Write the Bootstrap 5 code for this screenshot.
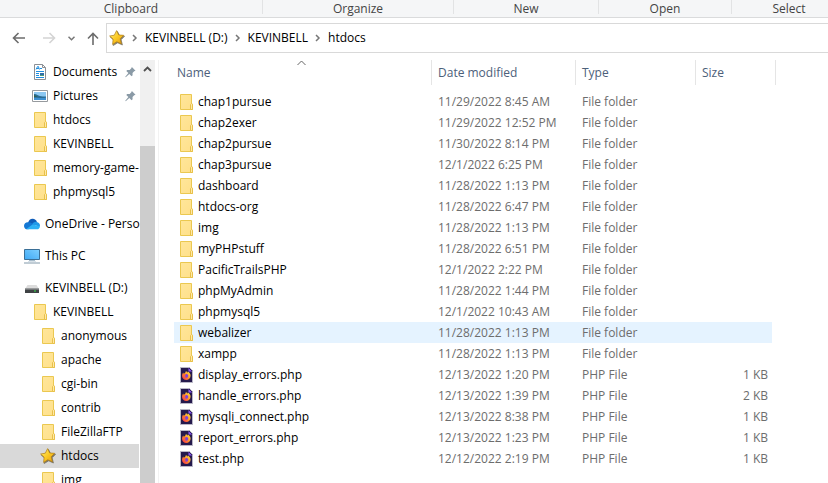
<!DOCTYPE html>
<html lang="en">
<head>
<meta charset="utf-8">
<meta name="viewport" content="width=device-width, initial-scale=1">
<title>htdocs</title>
<link href="https://cdn.jsdelivr.net/npm/bootstrap@5.3.0/dist/css/bootstrap.min.css" rel="stylesheet">
<style>
  body { font: 12px/18px "Open Sans", "Noto Sans", sans-serif; color: #000; background: #fff; }
  a { color: inherit; text-decoration: none; }
  svg { display: block; flex: none; }
  button { border: 0; padding: 0; background: none; color: inherit; }

  .ribbon { height: 18px; background: #f5f6f7; border-bottom: 1px solid #dadbdc; color: #444; }
  .ribbon-group { height: 14px; line-height: 17px; border-right: 1px solid #e2e3e4; text-align: center; flex: none; }
  .g-clip { width: 263px; } .g-org { width: 191px; } .g-new { width: 145px; } .g-open { width: 133px; } .g-sel { width: 114px; border: 0; }

  .address-row { padding: 5px 0 7px 12px; }
  .tools { width: 94px; gap: 12px; }
  .crumbs { height: 30px; gap: 7px; border: 1px solid #d9d9d9; border-right: 0; padding-left: 2px; }

  .tree-pane { width: 140px; }
  .tree-link { height: 24px; gap: 5px; padding-left: 24px; white-space: nowrap; }
  .level-1 { padding-left: 32px; }
  .level-2 { padding-left: 40px; }
  .tree-group + .tree-group { margin-top: 8px; }
  .tree-link.selected { background: #d9d9d9; margin-right: 1px; }
  .pin { margin: 0 4px 0 auto; }
  .scroll-track { width: 15px; background: #f0f0f0; }
  .scroll-up { height: 18px; margin-bottom: 68px; }
  .scroll-thumb { background: #cdcdcd; }
  .divider { width: 4px; border-right: 1px solid #f2f2f2; }

  .files-pane { padding-left: 15px; }
  .files { table-layout: fixed; width: 602px; border-collapse: separate; border-spacing: 0; }
  .files th { height: 25px; padding: 0 0 0 6px; font-weight: 400; color: #4c607a; border-right: 1px solid #e5e5e5; }
  .files th:first-child { padding-left: 3px; }
  .files tbody::before { content: ""; display: block; height: 6px; }
  .files td { height: 21px; padding: 0 0 0 6px; line-height: 21px; color: #6d6d6d; white-space: nowrap; }
  .files td:first-child { padding-left: 4px; color: #000; }
  .files td:nth-child(4) { text-align: right; padding-right: 4px; }
  .files tr.hovered td:not(:last-child) { background: #e5f3ff; }
  .file-name { gap: 4px; }
  .sort-mark { top: 0; left: 123px; }
</style>
<script src="https://cdn.jsdelivr.net/npm/bootstrap@5.3.0/dist/js/bootstrap.bundle.min.js"></script>
</head>
<body class="vh-100 d-flex flex-column overflow-hidden">

<svg width="0" height="0" class="position-absolute" aria-hidden="true">
  <defs>
    <linearGradient id="foldFill" x1="0" y1="0" x2="1" y2="1"><stop offset="0" stop-color="#ffe69a"/><stop offset="1" stop-color="#ffe08a"/></linearGradient>
    <linearGradient id="starFill" x1="0" y1="0" x2="1" y2="1"><stop offset="0" stop-color="#fff27a"/><stop offset=".5" stop-color="#fbc924"/><stop offset="1" stop-color="#e39a10"/></linearGradient>
    <linearGradient id="foxFill" x1="1" y1="0" x2="0" y2="1"><stop offset="0" stop-color="#fff04a"/><stop offset=".45" stop-color="#ff9a2a"/><stop offset="1" stop-color="#f5224e"/></linearGradient>
    <linearGradient id="screenFill" x1="0" y1="1" x2="1" y2="0"><stop offset="0" stop-color="#3fa9f5"/><stop offset="1" stop-color="#7fd0ff"/></linearGradient>
    <symbol id="folder" viewBox="0 0 16 16">
      <path d="M2.500.500h11v9l1 .5v5.500h-12z" fill="url(#foldFill)" stroke="#ebc850"/>
      <path d="M12.500 15.500v-5l1-1 1 1v5z" fill="#ffe9a6" stroke="#e8c04a"/>
    </symbol>
    <symbol id="star" viewBox="0 0 16 16">
      <path d="M8.500 1.500l2.200 4.300 4.900.4-3.500 3.500 1.300 5.300-4.700-2.200-4.500 2.700.6-5.300L1.300 7l4.800-.8z" fill="#5d5640" stroke="#5d5640" stroke-width=".8" opacity=".75"/>
      <path d="M7.600.6l2.100 4.400 5 .3-3.500 3.500 1.200 5-4.600-2-4.200 2.600.5-5.200L.6 6l4.700-.8z" fill="url(#starFill)" stroke="#b07c14" stroke-width=".7"/>
    </symbol>
    <symbol id="firefox-file" viewBox="0 0 16 16">
      <path d="M2.500.5h9l3 3v12h-12z" fill="#251a4d" stroke="#b9b7c6"/>
      <path d="M10.500 1l3.500 3.500h-3.500z" fill="#9059ff"/>
      <path d="M8 4.300c.8.300 1.300.8 1.500 1.400.3-.4.3-.9.200-1.300 2 1 3 2.600 2.900 4.400-.1 2.600-2 4.200-4.200 4.200-2.500 0-4.400-1.800-4.400-4.300 0-1.200.4-2.300 1.200-3.100l.5 1.100c.6-.4 1-.6 1.500-.6-.1-.7.2-1.300.8-1.800z" fill="url(#foxFill)"/>
      <circle cx="8.300" cy="8.800" r="1.900" fill="#7b3fe4"/>
      <path d="M5.500 7.300c1 .1 1.700-.2 2.600.2-.1.600-1 .8-1.300 1.200 0 .8.900 1.300 1.700 1-1 1.300-3 .6-3-2.400z" fill="#ff6a2e"/>
    </symbol>
    <symbol id="document" viewBox="0 0 16 16">
      <path d="M2.500.5h8l3 3v12h-11z" fill="#fff" stroke="#8b8f94"/>
      <path d="M10.500.5v3h3" fill="none" stroke="#8b8f94"/>
      <path d="M4 5.500l1.600-3h.8l1 3M4.600 4.500h2.300M8 4.500h2M4 7.500h8M4 9.500h3M4 11.500h3M4 13.500h8" fill="none" stroke="#1f8fe0"/>
      <path d="M8 9h4v3H8z" fill="#2f6ea8"/><path d="M8 11h4v1H8z" fill="#4f9a7a"/>
    </symbol>
    <symbol id="picture" viewBox="0 0 16 16">
      <path d="M.5 2.500h15v11H.5z" fill="#fff" stroke="#969a9e"/>
      <path d="M2 4h12v8H2z" fill="#8cc8f2"/>
      <path d="M2 6c2-.4 4 1.500 7 2.200 2 .5 4 .5 5 .3V12H2z" fill="#2a6c94"/>
      <path d="M2 10c4-.8 8 .8 12-.5V12H2z" fill="#3c8fd0"/><path d="M2 7l4 2H2z" fill="#2f5f52"/>
    </symbol>
    <symbol id="pin" viewBox="0 0 12 12">
      <path d="M7.500.500l4 4-1.500.7-1.800 1.800.1 2.600-1.100 1-2.500-2.500L.8 11.700l-.5-.5 3.400-4.100-2.300-2.300 1-1.100 2.700.1L6.900 2z" fill="#8a9aa6"/>
    </symbol>
    <symbol id="cloud" viewBox="0 0 16 16">
      <path d="M4 7C4.600 4 6.600 2.600 8.700 2.700c2 .1 3.600 1.200 4.200 3.200L9 9z" fill="#0f5cb8"/>
      <path d="M3.700 6.300c1.400-.3 2.500 0 3.600.8l3.700 2.400-6.500 3.800H3.600C1.500 13.300 0 11.800 0 9.900c0-2 1.600-3.500 3.700-3.600z" fill="#1478d4"/>
      <path d="M8 8.300c1.500-1.900 3-2.600 4.800-2.400 1.800.2 3.200 1.700 3.200 3.700l-.3 1.200z" fill="#1f98e8"/>
      <path d="M2.300 12.900l6.200-4.500 7.400 1.800c0 1.900-1.300 3.100-3.100 3.100H3.600z" fill="#2cb0f5"/>
    </symbol>
    <symbol id="monitor" viewBox="0 0 16 16">
      <path d="M.5 1.500h15v10H.5z" fill="url(#screenFill)" stroke="#3b6f96"/>
      <path d="M5 12.500h6" stroke="#a8bccb"/><path d="M4 13.500h8" stroke="#d7e1e8"/><path d="M0 15h16" stroke="#8199aa"/>
    </symbol>
    <symbol id="drive" viewBox="0 0 16 16">
      <path d="M3.500 5h9L15 9H1z" fill="#dcdcdc"/><path d="M1 8.500h14V13H1z" fill="#3f4245"/><path d="M1 8.500h14v1H1z" fill="#a5a7a9"/><path d="M10 11h2" stroke="#35e04b"/>
    </symbol>
    <symbol id="chev" viewBox="0 0 6 8"><path d="M1 1l3 3-3 3" fill="none" stroke="#777" stroke-width="1.500"/></symbol>
  </defs>
</svg>

<header>
  <div class="ribbon d-flex overflow-hidden">
    <div class="ribbon-group g-clip">Clipboard</div>
    <div class="ribbon-group g-org">Organize</div>
    <div class="ribbon-group g-new">New</div>
    <div class="ribbon-group g-open">Open</div>
    <div class="ribbon-group g-sel">Select</div>
  </div>
  <div class="address-row d-flex">
    <div class="tools d-flex align-items-center">
      <button type="button" aria-label="Back"><svg width="14" height="12" viewBox="0 0 14 12"><path d="M13 6H2M6.500 1L1.500 6l5 5" fill="none" stroke="#6c6c6c" stroke-width="1.600"/></svg></button>
      <button type="button" aria-label="Forward" class="ms-1"><svg width="14" height="12" viewBox="0 0 14 12"><path d="M1 6h11M7.500 1l5 5-5 5" fill="none" stroke="#d4d4d4" stroke-width="1.600"/></svg></button>
      <button type="button" aria-label="Recent locations"><svg width="7" height="5" viewBox="0 0 7 5"><path d="M.5.800l3 3 3-3" fill="none" stroke="#777" stroke-width="1.500"/></svg></button>
      <button type="button" aria-label="Up"><svg width="12" height="13" viewBox="0 0 12 13"><path d="M6 13V2M1 6.500l5-5 5 5" fill="none" stroke="#6c6c6c" stroke-width="1.600"/></svg></button>
    </div>
    <nav class="crumbs d-flex align-items-center flex-grow-1" aria-label="Path">
      <svg width="16" height="16"><use href="#star"/></svg>
      <svg width="6" height="8"><use href="#chev"/></svg>
      <a href="#">KEVINBELL (D:)</a>
      <svg width="6" height="8"><use href="#chev"/></svg>
      <a href="#">KEVINBELL</a>
      <svg width="6" height="8"><use href="#chev"/></svg>
      <a href="#">htdocs</a>
    </nav>
  </div>
</header>

<main class="d-flex flex-grow-1 overflow-hidden">
  <nav class="tree-pane flex-shrink-0 overflow-hidden" aria-label="Folders">
    <div class="tree-group">
      <a href="#" class="tree-link level-1 d-flex align-items-center"><svg width="16" height="16"><use href="#document"/></svg>Documents<svg class="pin" width="11" height="12"><use href="#pin"/></svg></a>
      <a href="#" class="tree-link level-1 d-flex align-items-center"><svg width="16" height="16"><use href="#picture"/></svg>Pictures<svg class="pin" width="11" height="12"><use href="#pin"/></svg></a>
      <a href="#" class="tree-link level-1 d-flex align-items-center"><svg width="16" height="16"><use href="#folder"/></svg>htdocs</a>
      <a href="#" class="tree-link level-1 d-flex align-items-center"><svg width="16" height="16"><use href="#folder"/></svg>KEVINBELL</a>
      <a href="#" class="tree-link level-1 d-flex align-items-center"><svg width="16" height="16"><use href="#folder"/></svg>memory-game-</a>
      <a href="#" class="tree-link level-1 d-flex align-items-center"><svg width="16" height="16"><use href="#folder"/></svg>phpmysql5</a>
    </div>
    <div class="tree-group">
      <a href="#" class="tree-link d-flex align-items-center"><svg width="16" height="16"><use href="#cloud"/></svg>OneDrive - Person</a>
    </div>
    <div class="tree-group">
      <a href="#" class="tree-link d-flex align-items-center"><svg width="16" height="16"><use href="#monitor"/></svg>This PC</a>
    </div>
    <div class="tree-group">
      <a href="#" class="tree-link d-flex align-items-center"><svg width="16" height="16"><use href="#drive"/></svg>KEVINBELL (D:)</a>
      <a href="#" class="tree-link level-1 d-flex align-items-center"><svg width="16" height="16"><use href="#folder"/></svg>KEVINBELL</a>
      <a href="#" class="tree-link level-2 d-flex align-items-center"><svg width="16" height="16"><use href="#folder"/></svg>anonymous</a>
      <a href="#" class="tree-link level-2 d-flex align-items-center"><svg width="16" height="16"><use href="#folder"/></svg>apache</a>
      <a href="#" class="tree-link level-2 d-flex align-items-center"><svg width="16" height="16"><use href="#folder"/></svg>cgi-bin</a>
      <a href="#" class="tree-link level-2 d-flex align-items-center"><svg width="16" height="16"><use href="#folder"/></svg>contrib</a>
      <a href="#" class="tree-link level-2 d-flex align-items-center"><svg width="16" height="16"><use href="#folder"/></svg>FileZillaFTP</a>
      <a href="#" class="tree-link level-2 selected d-flex align-items-center" aria-current="true"><svg width="16" height="16"><use href="#star"/></svg>htdocs</a>
      <a href="#" class="tree-link level-2 d-flex align-items-center"><svg width="16" height="16"><use href="#folder"/></svg>img</a>
    </div>
  </nav>
  <div class="scroll-track d-flex flex-column flex-shrink-0">
    <button type="button" class="scroll-up d-flex align-items-center justify-content-center" aria-label="Scroll up"><svg width="9" height="6" viewBox="0 0 9 6"><path d="M1 5l3.500-3.500L8 5" fill="none" stroke="#505050" stroke-width="1.800"/></svg></button>
    <div class="scroll-thumb flex-grow-1"></div>
  </div>
  <div class="divider flex-shrink-0"></div>

  <section class="files-pane flex-grow-1 overflow-hidden">
    <table class="files">
      <colgroup><col width="258"><col width="144"><col width="120"><col width="76"><col width="4"></colgroup>
      <thead>
        <tr>
          <th scope="col" class="position-relative"><button type="button">Name</button><svg class="sort-mark position-absolute" width="9" height="6" viewBox="0 0 9 6"><path d="M.5 5l4-4 4 4" fill="none" stroke="#666"/></svg></th>
          <th scope="col"><button type="button">Date modified</button></th>
          <th scope="col"><button type="button">Type</button></th>
          <th scope="col" colspan="2"><button type="button">Size</button></th>
        </tr>
      </thead>
      <tbody>
        <tr><td><div class="file-name d-flex align-items-center"><svg width="16" height="16"><use href="#folder"/></svg>chap1pursue</div></td><td>11/29/2022 8:45 AM</td><td>File folder</td><td></td><td></td></tr>
        <tr><td><div class="file-name d-flex align-items-center"><svg width="16" height="16"><use href="#folder"/></svg>chap2exer</div></td><td>11/29/2022 12:52 PM</td><td>File folder</td><td></td><td></td></tr>
        <tr><td><div class="file-name d-flex align-items-center"><svg width="16" height="16"><use href="#folder"/></svg>chap2pursue</div></td><td>11/30/2022 8:14 PM</td><td>File folder</td><td></td><td></td></tr>
        <tr><td><div class="file-name d-flex align-items-center"><svg width="16" height="16"><use href="#folder"/></svg>chap3pursue</div></td><td>12/1/2022 6:25 PM</td><td>File folder</td><td></td><td></td></tr>
        <tr><td><div class="file-name d-flex align-items-center"><svg width="16" height="16"><use href="#folder"/></svg>dashboard</div></td><td>11/28/2022 1:13 PM</td><td>File folder</td><td></td><td></td></tr>
        <tr><td><div class="file-name d-flex align-items-center"><svg width="16" height="16"><use href="#folder"/></svg>htdocs-org</div></td><td>11/28/2022 6:47 PM</td><td>File folder</td><td></td><td></td></tr>
        <tr><td><div class="file-name d-flex align-items-center"><svg width="16" height="16"><use href="#folder"/></svg>img</div></td><td>11/28/2022 1:13 PM</td><td>File folder</td><td></td><td></td></tr>
        <tr><td><div class="file-name d-flex align-items-center"><svg width="16" height="16"><use href="#folder"/></svg>myPHPstuff</div></td><td>11/28/2022 6:51 PM</td><td>File folder</td><td></td><td></td></tr>
        <tr><td><div class="file-name d-flex align-items-center"><svg width="16" height="16"><use href="#folder"/></svg>PacificTrailsPHP</div></td><td>12/1/2022 2:22 PM</td><td>File folder</td><td></td><td></td></tr>
        <tr><td><div class="file-name d-flex align-items-center"><svg width="16" height="16"><use href="#folder"/></svg>phpMyAdmin</div></td><td>11/28/2022 1:44 PM</td><td>File folder</td><td></td><td></td></tr>
        <tr><td><div class="file-name d-flex align-items-center"><svg width="16" height="16"><use href="#folder"/></svg>phpmysql5</div></td><td>12/1/2022 10:43 AM</td><td>File folder</td><td></td><td></td></tr>
        <tr class="hovered"><td><div class="file-name d-flex align-items-center"><svg width="16" height="16"><use href="#folder"/></svg>webalizer</div></td><td>11/28/2022 1:13 PM</td><td>File folder</td><td></td><td></td></tr>
        <tr><td><div class="file-name d-flex align-items-center"><svg width="16" height="16"><use href="#folder"/></svg>xampp</div></td><td>11/28/2022 1:13 PM</td><td>File folder</td><td></td><td></td></tr>
        <tr><td><div class="file-name d-flex align-items-center"><svg width="16" height="16"><use href="#firefox-file"/></svg>display_errors.php</div></td><td>12/13/2022 1:20 PM</td><td>PHP File</td><td>1 KB</td><td></td></tr>
        <tr><td><div class="file-name d-flex align-items-center"><svg width="16" height="16"><use href="#firefox-file"/></svg>handle_errors.php</div></td><td>12/13/2022 1:39 PM</td><td>PHP File</td><td>2 KB</td><td></td></tr>
        <tr><td><div class="file-name d-flex align-items-center"><svg width="16" height="16"><use href="#firefox-file"/></svg>mysqli_connect.php</div></td><td>12/13/2022 8:38 PM</td><td>PHP File</td><td>1 KB</td><td></td></tr>
        <tr><td><div class="file-name d-flex align-items-center"><svg width="16" height="16"><use href="#firefox-file"/></svg>report_errors.php</div></td><td>12/13/2022 1:23 PM</td><td>PHP File</td><td>1 KB</td><td></td></tr>
        <tr><td><div class="file-name d-flex align-items-center"><svg width="16" height="16"><use href="#firefox-file"/></svg>test.php</div></td><td>12/12/2022 2:19 PM</td><td>PHP File</td><td>1 KB</td><td></td></tr>
      </tbody>
    </table>
  </section>
</main>
</body>
</html>
